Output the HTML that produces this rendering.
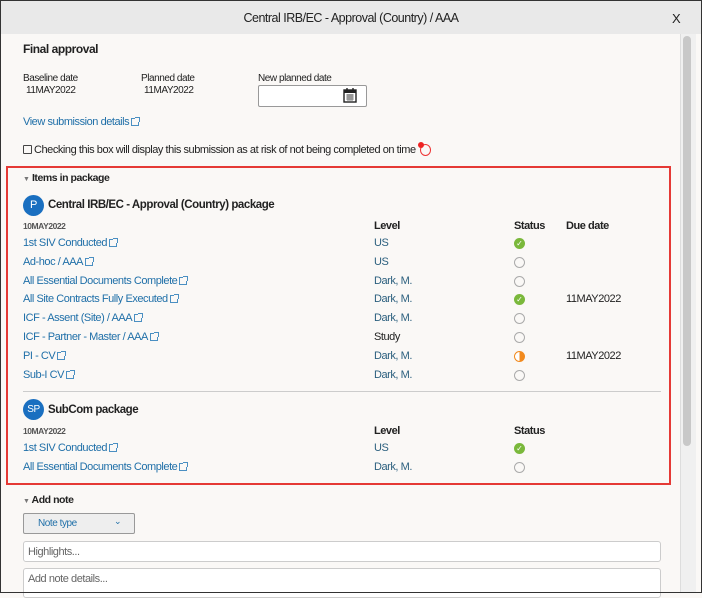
<!DOCTYPE html><html><head><style>
*{margin:0;padding:0;box-sizing:border-box}
body{width:702px;height:593px;overflow:hidden;font-family:"Liberation Sans",Arial,sans-serif;font-size:11px;color:#222;background:#faf8f6;position:relative;letter-spacing:-0.45px}
.a{position:absolute;white-space:nowrap}
.l{color:#1f6fa8}
.d{color:#2b5f7e}
.b{font-weight:bold}
.ext{display:inline-block;width:8px;height:8px;border:1px solid #4a8fc2;margin-left:2px;vertical-align:-1px;position:relative}
.ext:after{content:"";position:absolute;right:-2px;top:-2px;width:4px;height:4px;border-top:1px solid #4a8fc2;border-right:1px solid #4a8fc2;background:#faf8f6}
.ok{width:11px;height:11px;border-radius:50%;background:#7ab83b;color:#fff;font-size:8px;line-height:11px;text-align:center;letter-spacing:0}
.em{width:11px;height:11px;border-radius:50%;border:1px solid #aaa}
.hf{width:11px;height:11px;border-radius:50%;border:1px solid #f28a1e;background:linear-gradient(90deg,#fff 50%,#f28a1e 50%)}
.av{width:21px;height:21px;border-radius:50%;background:#1a6fc0;color:#fff;text-align:center;line-height:21px;font-size:11px}
</style></head><body>
<div class="a" style="left:0;top:0;width:702px;height:593px;border:1px solid #333;z-index:5;pointer-events:none"></div>
<div class="a" style="left:0;top:0;width:702px;height:34px;background:#e9e9e9"></div>
<div class="a" style="left:0;top:11px;width:702px;text-align:center;font-size:12.5px;letter-spacing:-0.5px">Central IRB/EC - Approval (Country) / AAA</div>
<div class="a" style="left:672px;top:11px;font-size:13px">X</div>
<div class="a" style="left:680px;top:34px;width:16px;height:559px;background:#f0f0f0;border-left:1px solid #ddd"></div>
<div class="a" style="left:683px;top:36px;width:8px;height:410px;background:#c8c8c8;border-radius:4px"></div>
<div class="a b" style="left:23px;top:42px;font-size:12px">Final approval</div>
<div class="a" style="left:23px;top:73px;font-size:10px">Baseline date</div>
<div class="a" style="left:26px;top:85px;font-size:10px">11MAY2022</div>
<div class="a" style="left:141px;top:73px;font-size:10px">Planned date</div>
<div class="a" style="left:144px;top:85px;font-size:10px">11MAY2022</div>
<div class="a" style="left:258px;top:73px;font-size:10px">New planned date</div>
<div class="a" style="left:258px;top:85px;width:109px;height:22px;border:1px solid #999;border-radius:2px;background:#fff"></div>
<svg class="a" style="left:342px;top:87px" width="16" height="16" viewBox="0 0 16 16"><rect x="2" y="3" width="12" height="12" fill="none" stroke="#222" stroke-width="1.4"/><rect x="2" y="3" width="12" height="3" fill="#222"/><path d="M5 1v3M11 1v3" stroke="#222" stroke-width="1.4"/><path d="M4 8h8M4 10h8M4 12h8M6 7v7M8 7v7M10 7v7" stroke="#222" stroke-width=".6"/></svg>
<div class="a l" style="left:23px;top:116px">View submission details<span class="ext"></span></div>
<div class="a" style="left:23px;top:145px;width:9px;height:9px;border:1px solid #444;border-radius:1px"></div>
<div class="a" style="left:34px;top:144px">Checking this box will display this submission as at risk of not being completed on time</div>
<div class="a" style="left:420px;top:144px;width:11px;height:12px;border:1px solid #e33;border-radius:50%"></div>
<div class="a" style="left:418px;top:142px;width:6px;height:6px;background:#e22;border-radius:50%"></div>
<div class="a" style="left:6px;top:166px;width:665px;height:319px;border:2px solid #e53935"></div>
<div class="a b" style="left:23px;top:172px;font-size:10.5px"><span style="font-size:7px;color:#777">▼</span> Items in package</div>
<div class="a av" style="left:23px;top:195px">P</div>
<div class="a b" style="left:48px;top:199px;font-size:11.5px">Central IRB/EC - Approval (Country) package</div>
<div class="a b" style="left:23px;top:221px;font-size:8.5px;color:#555">10MAY2022</div>
<div class="a b" style="left:374px;top:220px">Level</div>
<div class="a b" style="left:514px;top:220px">Status</div>
<div class="a b" style="left:566px;top:220px">Due date</div>

<div class="a l" style="left:23px;top:237px">1st SIV Conducted<span class="ext"></span></div><div class="a d" style="left:374px;top:237px">US</div><div class="a ok" style="left:514px;top:238px">✓</div>
<div class="a l" style="left:23px;top:256px">Ad-hoc / AAA<span class="ext"></span></div><div class="a d" style="left:374px;top:256px">US</div><div class="a em" style="left:514px;top:257px"></div>
<div class="a l" style="left:23px;top:275px">All Essential Documents Complete<span class="ext"></span></div><div class="a d" style="left:374px;top:275px">Dark, M.</div><div class="a em" style="left:514px;top:276px"></div>
<div class="a l" style="left:23px;top:293px">All Site Contracts Fully Executed<span class="ext"></span></div><div class="a d" style="left:374px;top:293px">Dark, M.</div><div class="a ok" style="left:514px;top:294px">✓</div><div class="a" style="left:566px;top:293px">11MAY2022</div>
<div class="a l" style="left:23px;top:312px">ICF - Assent (Site) / AAA<span class="ext"></span></div><div class="a d" style="left:374px;top:312px">Dark, M.</div><div class="a em" style="left:514px;top:313px"></div>
<div class="a l" style="left:23px;top:331px">ICF - Partner - Master / AAA<span class="ext"></span></div><div class="a" style="left:374px;top:331px">Study</div><div class="a em" style="left:514px;top:332px"></div>
<div class="a l" style="left:23px;top:350px">PI - CV<span class="ext"></span></div><div class="a d" style="left:374px;top:350px">Dark, M.</div><div class="a hf" style="left:514px;top:351px"></div><div class="a" style="left:566px;top:350px">11MAY2022</div>
<div class="a l" style="left:23px;top:369px">Sub-I CV<span class="ext"></span></div><div class="a d" style="left:374px;top:369px">Dark, M.</div><div class="a em" style="left:514px;top:370px"></div>

<div class="a" style="left:23px;top:391px;width:638px;height:1px;background:#ccc"></div>
<div class="a av" style="left:23px;top:399px;font-size:10px">SP</div>
<div class="a b" style="left:48px;top:404px;font-size:11.5px">SubCom package</div>
<div class="a b" style="left:23px;top:426px;font-size:8.5px;color:#555">10MAY2022</div>
<div class="a b" style="left:374px;top:425px">Level</div>
<div class="a b" style="left:514px;top:425px">Status</div>
<div class="a l" style="left:23px;top:442px">1st SIV Conducted<span class="ext"></span></div><div class="a d" style="left:374px;top:442px">US</div><div class="a ok" style="left:514px;top:443px">✓</div>
<div class="a l" style="left:23px;top:461px">All Essential Documents Complete<span class="ext"></span></div><div class="a d" style="left:374px;top:461px">Dark, M.</div><div class="a em" style="left:514px;top:462px"></div>

<div class="a b" style="left:23px;top:494px;font-size:10.5px"><span style="font-size:7px;color:#777">▼</span> Add note</div>
<div class="a" style="left:23px;top:513px;width:112px;height:21px;border:1px solid #999;border-radius:2px;background:#eee"></div>
<div class="a l" style="left:38px;top:518px;font-size:10px">Note type</div>
<div class="a l" style="left:114px;top:516px;font-size:9px">⌄</div>
<div class="a" style="left:23px;top:541px;width:638px;height:21px;border:1px solid #ccc;border-radius:3px;background:#fff"></div>
<div class="a" style="left:28px;top:546px;color:#666">Highlights...</div>
<div class="a" style="left:23px;top:568px;width:638px;height:30px;border:1px solid #ccc;border-radius:3px;background:#fff"></div>
<div class="a" style="left:28px;top:573px;color:#666">Add note details...</div>
</body></html>
